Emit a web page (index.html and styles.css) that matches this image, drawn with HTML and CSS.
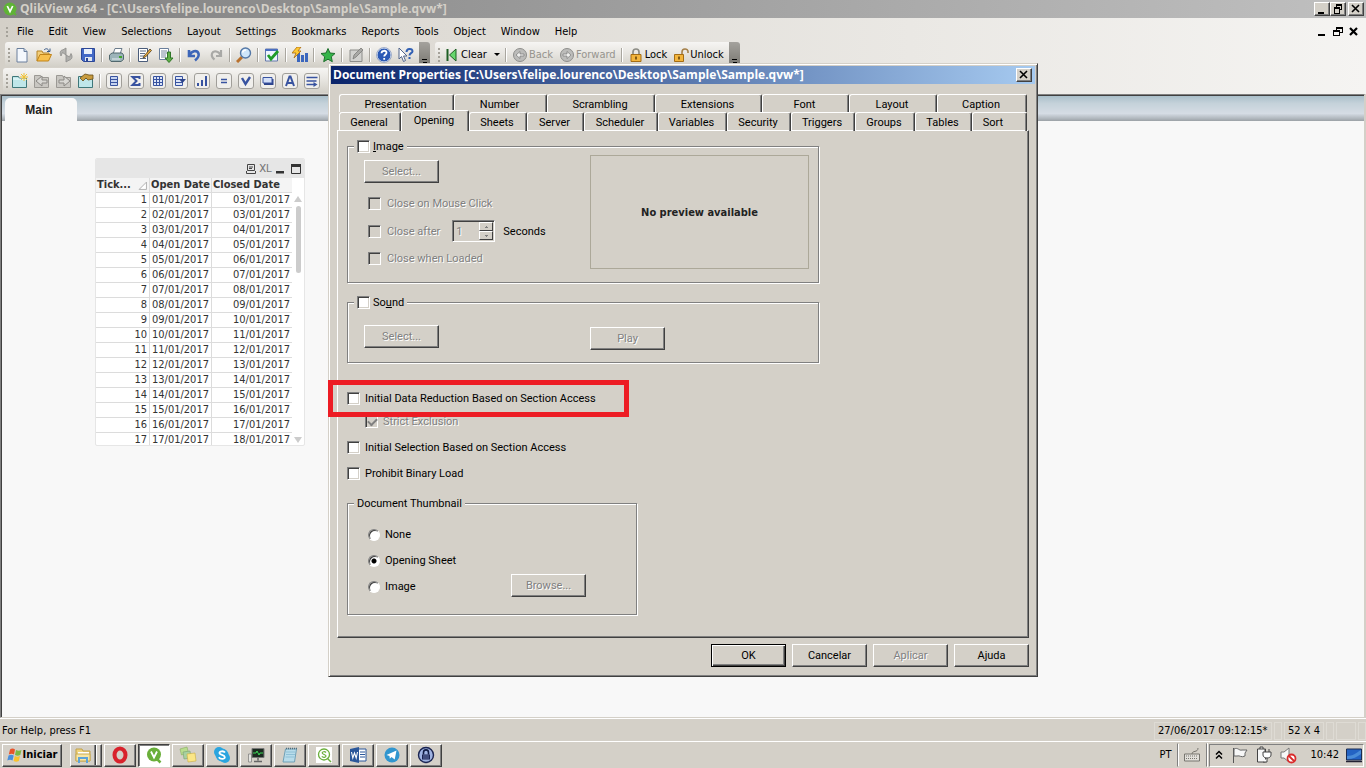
FILE: index.html
```html
<!DOCTYPE html>
<html lang="en">
  <head>
    <meta charset="utf-8" />
    <meta name="viewport" content="width=device-width, initial-scale=1.0" />
    <title>QlikView x64 - [C:\Users\felipe.lourenco\Desktop\Sample\Sample.qvw*]</title>
    <link rel="stylesheet" href="styles.css">
  </head>

  <body>
    <header class="titlebar">
      <svg class="logo" viewBox="0 0 14 14"><circle cx="7" cy="7" r="6.500" fill="#5fb336"/><path d="M9 9l4 4" stroke="#5fb336" stroke-width="2"/><path d="M4.300 4l2.700 5.600L9.700 4" fill="none" stroke="#fff" stroke-width="1.700"/></svg>
      <h1>QlikView x64 - [C:\Users\felipe.lourenco\Desktop\Sample\Sample.qvw*]</h1>
      <div class="winbtns">
        <button class="winbtn" aria-label="Minimize"><svg viewBox="0 0 14 12"><path d="M3 9h6v2H3z"/></svg></button>
        <button class="winbtn" aria-label="Restore"><svg viewBox="0 0 14 12"><path d="M5 1h6v6H9V6h1V3H6v1H5zM3 4h6v7H3zm1 2v4h4V6z" fill-rule="evenodd"/></svg></button>
        <button class="winbtn winclose" aria-label="Close"><svg viewBox="0 0 14 12"><path d="M3 2l7 7M10 2L3 9" stroke="#000" stroke-width="1.600"/></svg></button>
      </div>
    </header>

    <div class="chrome">
      <nav class="menubar">
        <span class="grip"></span>
        <a href="#">File</a>
        <a href="#">Edit</a>
        <a href="#">View</a>
        <a href="#">Selections</a>
        <a href="#">Layout</a>
        <a href="#">Settings</a>
        <a href="#">Bookmarks</a>
        <a href="#">Reports</a>
        <a href="#">Tools</a>
        <a href="#">Object</a>
        <a href="#">Window</a>
        <a href="#">Help</a>
        <div class="childbtns">
          <button aria-label="Minimize sheet"><svg viewBox="0 0 10 10"><path d="M1 7h7v2H1z"/></svg></button>
          <button aria-label="Restore sheet"><svg viewBox="0 0 10 10"><path d="M3 0h7v6H7V5h2V2H4v1H3zM0 3h7v6H0zm1 2v3h5V5z" fill-rule="evenodd"/></svg></button>
          <button aria-label="Close sheet"><svg viewBox="0 0 10 10"><path d="M1 1l7 7M8 1L1 8" stroke="#000" stroke-width="2.200"/></svg></button>
        </div>
      </nav>

      <div class="bars">
        <div class="toolbar">
          <span class="grip"></span>
          <button class="tool" aria-label="New"><svg viewBox="0 0 16 16"><path d="M3 1.500h7l3 3v10.500H3z" fill="#f4f8fd" stroke="#6a7f9c"/><path d="M10 1.500v3h3" fill="#c9d8ea" stroke="#6a7f9c"/></svg></button>
          <button class="tool" aria-label="Open"><svg viewBox="0 0 16 16"><path d="M1 14V4h5l1 2h6v2" fill="#f3cf7b" stroke="#b58429"/><path d="M1 14l3-6.500h11.500L12.500 14z" fill="#f8c04c" stroke="#c08319"/><path d="M8 3c2-2 4-1.500 5 1M14 1.500v3h-3" fill="none" stroke="#3a5a88"/></svg></button>
          <button class="tool" aria-label="Reload" disabled><svg viewBox="0 0 16 16"><path d="M8 1v7L4.500 5.500 3 9C1 5 3 3 5 2.800zM8 15V8l3.500 2L13 6.500c2.500 4 0 6.500-2 6.700z" fill="#b0b0ad" stroke="#8c8c89" stroke-width=".8"/></svg></button>
          <button class="tool" aria-label="Save"><svg viewBox="0 0 16 16"><path d="M1.500 1.500h13v13h-11l-2-2z" fill="#4369c7" stroke="#2c4796"/><path d="M4 2h8v5H4z" fill="#e9f0fb"/><path d="M5 10h7v4H5z" fill="#dfe5ef"/><path d="M6 11h2v3H6z" fill="#2c4796"/></svg></button>
          <i class="sep"></i>
          <button class="tool" aria-label="Print"><svg viewBox="0 0 16 16"><path d="M5 7l2-5.500h7L12 7z" fill="#fff" stroke="#6b7c8c"/><path d="M1.500 8L4 6h10l1.500 2v4.500L13 14.500H3L1.500 12.500z" fill="#9cb4b9" stroke="#51686e"/><path d="M4 12h8" stroke="#e6eef0"/><path d="M11 10h3" stroke="#41a42c" stroke-width="2"/></svg></button>
          <i class="sep"></i>
          <button class="tool" aria-label="Edit Script"><svg viewBox="0 0 16 16"><path d="M2.500 1.500h9v13h-9z" fill="#fff" stroke="#4b5d7b"/><path d="M4 4h6M4 6.500h5M4 9h6M4 11.500h6" stroke="#5a6a84"/><path d="M8 9l6-7 1.500 1.500L9.500 10 7 11z" fill="#e6a83b" stroke="#4c3a1b" stroke-width=".8"/></svg></button>
          <button class="tool" aria-label="Partial Reload"><svg viewBox="0 0 16 16"><path d="M1.500 1.500h9v11h-9z" fill="#fff" stroke="#6a7f9c"/><path d="M3 4h6M3 6h6M3 8h5M3 10h5" stroke="#7788a0"/><path d="M9.500 5h3v6H15l-4 4.500L7 11h2.500z" fill="#5fae47" stroke="#2f7628"/></svg></button>
          <i class="sep"></i>
          <button class="tool" aria-label="Undo"><svg viewBox="0 0 16 16"><path d="M3 3v6h6M3.500 8.500C5 4 11 2.500 12.500 6.500c.8 2.500-1 5-3.500 7" fill="none" stroke="#3d66b8" stroke-width="2.600"/></svg></button>
          <button class="tool" aria-label="Redo" disabled><svg viewBox="0 0 16 16"><path d="M13 3v6H8M12.500 8.500C11 4 5.500 3 4 6.500c-.8 2.500.5 4.500 2.500 6" fill="none" stroke="#a9a9a6" stroke-width="2.200"/></svg></button>
          <i class="sep"></i>
          <button class="tool" aria-label="Search"><svg viewBox="0 0 16 16"><path d="M1 15l5-5" stroke="#b9712c" stroke-width="3"/><circle cx="9.500" cy="6" r="5" fill="#cfe6fa" stroke="#5377a6" stroke-width="1.400"/><path d="M6.500 5.500c.5-2 2-2.500 3.500-2.500" fill="none" stroke="#fff" stroke-width="1.500"/></svg></button>
          <i class="sep"></i>
          <button class="tool" aria-label="Current Selections"><svg viewBox="0 0 16 16"><path d="M1.500 2h12v12h-12z" fill="#eef4ff" stroke="#6479a8"/><path d="M1 2h13v2H1z" fill="#4c6fc0"/><path d="M4 8l3 4 7-8" fill="none" stroke="#1f9c28" stroke-width="2.800"/></svg></button>
          <i class="sep"></i>
          <button class="tool" aria-label="Quick Chart"><svg viewBox="0 0 16 16"><path d="M5 5h3v10H5zM9 8h3v7H9zM13 6h3v9h-3z" fill="#3b66bd"/><path d="M5 0h4L6 4h3L2 11l2-5H0z" fill="#ffc933" stroke="#a9690f" stroke-width=".8"/></svg></button>
          <i class="sep"></i>
          <button class="tool" aria-label="Add Bookmark"><svg viewBox="0 0 16 16"><path d="M8 1.500l2 4.500 5 .5-3.700 3.300 1 4.900L8 12.200l-4.300 2.500 1-4.900L1 6.500 6 6z" fill="#35b449" stroke="#1d6e2b"/></svg></button>
          <i class="sep"></i>
          <button class="tool" aria-label="Notes" disabled><svg viewBox="0 0 16 16"><path d="M2 3h12v11.500H2z" fill="#d2d2cf" stroke="#8c8c89"/><path d="M5 12l1-4 7-7 2 2-7 7z" fill="#a9a9a6" stroke="#7b7b78" stroke-width=".8"/></svg></button>
          <i class="sep"></i>
          <button class="tool" aria-label="Help"><svg viewBox="0 0 16 16"><circle cx="8" cy="8" r="7" fill="#2b59b5" stroke="#dce6f6"/><circle cx="8" cy="8" r="7.500" fill="none" stroke="#7388b3" stroke-width=".6"/><path d="M5.500 6.200C5.500 3 10.800 3 10.500 6c-.2 1.500-2.300 1.500-2.300 3.500M8.200 11v1.800" fill="none" stroke="#fff" stroke-width="1.800"/></svg></button>
          <button class="tool" aria-label="Context Help"><svg viewBox="0 0 16 16"><path d="M1 1v11l2.500-2.500 2 5 2-1-2-4.500H9z" fill="#fff" stroke="#50648b"/><path d="M8.500 5C8.500 1 14.500 1 14.500 4.200c0 2-3 2-3 4.300M11.500 10v2" fill="none" stroke="#3260b4" stroke-width="2"/></svg></button>
          <span class="overflow"></span>
        </div>

        <div class="toolbar selections">
          <span class="grip"></span>
          <button class="tool wide"><svg viewBox="0 0 16 16"><path d="M3.500 2v12" stroke="#1d5e24" stroke-width="2"/><path d="M12 2v12L5.500 8z" fill="#67d66d" stroke="#1d5e24"/></svg>Clear<b class="arrow"></b></button>
          <i class="sep"></i>
          <button class="tool wide" disabled><svg viewBox="0 0 16 16"><circle cx="8" cy="8" r="6.500" fill="#bcbcba" stroke="#8e8e8c"/><path d="M12 7H8V4.500L4 8l4 3.500V9h4z" fill="#efefed" stroke="#7a7a78" stroke-width=".7"/></svg>Back</button>
          <button class="tool wide" disabled><svg viewBox="0 0 16 16"><circle cx="8" cy="8" r="6.500" fill="#bcbcba" stroke="#8e8e8c"/><path d="M4 7h4V4.500L12 8l-4 3.500V9H4z" fill="#efefed" stroke="#7a7a78" stroke-width=".7"/></svg>Forward</button>
          <i class="sep"></i>
          <button class="tool wide"><svg viewBox="0 0 16 16"><path d="M5 8V5c0-4 6-4 6 0v3" fill="none" stroke="#8d8d86" stroke-width="1.700"/><path d="M3 7.500h10v7H3z" fill="#f3b53d" stroke="#a56d14"/><path d="M8 9.500v3" stroke="#5e3d06" stroke-width="1.500"/></svg>Lock</button>
          <button class="tool wide"><svg viewBox="0 0 16 16"><path d="M9 8V5c0-4 6-4 6-.5V6" fill="none" stroke="#a5804a" stroke-width="1.600"/><path d="M1.500 7.500h9v7h-9z" fill="#f3b53d" stroke="#a56d14"/><path d="M6 9.500v3" stroke="#5e3d06" stroke-width="1.500"/></svg>Unlock</button>
          <span class="overflow"></span>
        </div>
      </div>

      <div class="bars">
        <div class="toolbar design">
          <span class="grip"></span>
          <button class="tool" aria-label="Add Sheet"><svg viewBox="0 0 16 16"><path d="M.5 3.500h6l1 2h7v9H.5z" fill="#bfe6e9" stroke="#3e7779"/><path d="M1 6l13 0" stroke="#f2ffff"/><path d="M12 0v8M8 4h8M9 1l6 6M15 1L9 7" stroke="#f1c232"/></svg></button>
          <button class="tool" aria-label="Promote Sheet" disabled><svg viewBox="0 0 16 16"><path d="M.5 2.500h6l1 2h7v10H.5z" fill="#c9c7c2" stroke="#9b9994"/><path d="M13 7H8V3L2 8l6 5v-3h5z" fill="#d9d8d4" stroke="#8b8985"/></svg></button>
          <button class="tool" aria-label="Demote Sheet" disabled><svg viewBox="0 0 16 16"><path d="M.5 2.500h6l1 2h7v10H.5z" fill="#c9c7c2" stroke="#9b9994"/><path d="M3 7h5V3l6 5-6 5v-3H3z" fill="#d9d8d4" stroke="#8b8985"/></svg></button>
          <button class="tool" aria-label="Sheet Properties"><svg viewBox="0 0 16 16"><path d="M.5 3.500h6l1 2h7v9H.5z" fill="#bfe6e9" stroke="#3e7779"/><path d="M2 5l5-4 4 1 4 0v4l-5 1-2-2-3 3z" fill="#c79b3e" stroke="#674b16" stroke-width=".8"/></svg></button>
          <i class="sep"></i>
          <button class="tool box" aria-label="List Box"><svg viewBox="1 1 14 14"><path d="M4.500 3.500h7v9h-7zM4 6.500h8M4 9.500h8" fill="#c5d3f0" stroke="#3853a0"/></svg></button>
          <button class="tool box" aria-label="Statistics Box"><svg viewBox="1 1 14 14"><path d="M11.500 6V4h-7l4 4-4 4h7v-2" fill="none" stroke="#3853a0" stroke-width="2"/></svg></button>
          <button class="tool box" aria-label="Table Box"><svg viewBox="1 1 14 14"><path d="M3.500 3.500h9v9h-9zM3 6.500h10M3 9.500h10M6.500 3v10M9.500 3v10" fill="#dbe4f7" stroke="#3853a0"/></svg></button>
          <button class="tool box" aria-label="Multi Box"><svg viewBox="1 1 14 14"><path d="M3.500 3.500h7v9h-7zM3 6.500h8M3 9.500h8" fill="#dbe4f7" stroke="#3853a0"/><path d="M7 6h7l-3.500 4z" fill="#2c438a"/></svg></button>
          <button class="tool box" aria-label="Chart"><svg viewBox="1 1 14 14"><path d="M3 10h2v3H3zM7 7h2v6H7zM11 3h2v10h-2z" fill="#3853a0"/></svg></button>
          <button class="tool box" aria-label="Input Box"><svg viewBox="1 1 14 14"><path d="M5 6.500h6M5 9.500h6" stroke="#3853a0" stroke-width="1.600"/></svg></button>
          <button class="tool box" aria-label="Current Selections Box"><svg viewBox="1 1 14 14"><path d="M4 5l3.500 6L12 4" fill="none" stroke="#3853a0" stroke-width="2.400"/></svg></button>
          <button class="tool box" aria-label="Button"><svg viewBox="1 1 14 14"><path d="M4 6h9.500v6H4z" fill="#2c438a"/><path d="M3 4.500h9v5.500H3z" fill="#d4e0f8" stroke="#3853a0"/></svg></button>
          <button class="tool box" aria-label="Text Object"><svg viewBox="1 1 14 14"><path d="M4 13L7.500 3.500h1L12 13M5.500 10h5" fill="none" stroke="#3853a0" stroke-width="2"/></svg></button>
          <button class="tool box" aria-label="Line Object"><svg viewBox="1 1 14 14"><path d="M2.500 4.500h11M2.500 8h10M2.500 11.500h8" stroke="#3853a0" stroke-width="1.600"/><path d="M9.500 9v5l4-2.500z" fill="#3853a0"/></svg></button>
        </div>
      </div>
    </div>

    <main class="workspace">
      <div class="sheettabs"><a class="sheettab" href="#">Main</a></div>

      <section class="tablebox">
        <div class="caption">
          <svg viewBox="0 0 10 10"><path d="M1.500.5h7v6h-7zM3 3h4M3 4.500h3M.5 7v2.500h9V7" fill="none" stroke="#444"/></svg>
          <span>XL</span>
          <svg viewBox="0 0 10 10"><path d="M1 7h8v2.500H1z" fill="#333"/></svg>
          <svg class="max" viewBox="0 0 10 10"><path d="M.5.5h9v9h-9z" fill="none" stroke="#333"/><path d="M0 0h10v3H0z" fill="#333"/></svg>
        </div>
        <div class="tablebody">
          <table>
            <thead>
              <tr><th>Tick...<svg viewBox="0 0 8 8"><path d="M1 7.500h6.500V1z" fill="#fff" stroke="#aaa" stroke-width=".8"/></svg></th><th>Open Date</th><th>Closed Date</th></tr>
            </thead>
            <tbody>
              <tr><td>1</td><td>01/01/2017</td><td>03/01/2017</td></tr>
              <tr><td>2</td><td>02/01/2017</td><td>03/01/2017</td></tr>
              <tr><td>3</td><td>03/01/2017</td><td>04/01/2017</td></tr>
              <tr><td>4</td><td>04/01/2017</td><td>05/01/2017</td></tr>
              <tr><td>5</td><td>05/01/2017</td><td>06/01/2017</td></tr>
              <tr><td>6</td><td>06/01/2017</td><td>07/01/2017</td></tr>
              <tr><td>7</td><td>07/01/2017</td><td>08/01/2017</td></tr>
              <tr><td>8</td><td>08/01/2017</td><td>09/01/2017</td></tr>
              <tr><td>9</td><td>09/01/2017</td><td>10/01/2017</td></tr>
              <tr><td>10</td><td>10/01/2017</td><td>11/01/2017</td></tr>
              <tr><td>11</td><td>11/01/2017</td><td>12/01/2017</td></tr>
              <tr><td>12</td><td>12/01/2017</td><td>13/01/2017</td></tr>
              <tr><td>13</td><td>13/01/2017</td><td>14/01/2017</td></tr>
              <tr><td>14</td><td>14/01/2017</td><td>15/01/2017</td></tr>
              <tr><td>15</td><td>15/01/2017</td><td>16/01/2017</td></tr>
              <tr><td>16</td><td>16/01/2017</td><td>17/01/2017</td></tr>
              <tr><td>17</td><td>17/01/2017</td><td>18/01/2017</td></tr>
            </tbody>
          </table>
          <div class="scroll">
            <i class="up"></i>
            <i class="thumb"></i>
            <i class="down"></i>
          </div>
        </div>
      </section>
    </main>

    <footer class="statusbar">
      <span class="hint">For Help, press F1</span>
      <span class="pane date">27/06/2017 09:12:15*</span>
      <span class="pane"></span>
      <span class="pane size">52 X 4</span>
      <span class="pane"></span>
      <span class="pane blank"></span>
      <span class="pane"></span>
    </footer>

    <div class="taskbar">
      <button class="start"><svg viewBox="0 0 16 16"><path d="M3 2.500c2-1.500 3.500-1 5 0L7 7.500C5.500 6.500 4 6.500 1.800 7.500z" fill="#e8542a"/><path d="M9 3c2 1 3.500 1 5.500 0l-1.200 5c-2 1-3.600.8-5.300 0z" fill="#7cb943"/><path d="M1.500 8.500c2-1.200 3.500-1 5.200 0l-1.200 5c-1.700-1-3.200-1-5.200 0z" fill="#4a8fdc"/><path d="M7.800 9c1.800 1 3.300.9 5.200 0l-1.200 5c-2 1-3.500.9-5.200 0z" fill="#f9c22d"/></svg>Iniciar</button>
      <div class="tasks">
        <button class="task stacked" aria-label="Explorer"><svg viewBox="0 0 18 18"><path d="M2 3h6l1 2h7v10H2z" fill="#f0d47c" stroke="#c0a04b"/><path d="M4 6h11v5H4z" fill="#fff"/><path d="M2 8h14v7H2z" fill="#f8e6a3" stroke="#c9ab56"/><path d="M5 17v-5h8v5" fill="none" stroke="#5ea3d8" stroke-width="2"/></svg></button>
        <button class="task" aria-label="Opera"><svg viewBox="0 0 18 18"><ellipse cx="9" cy="9" rx="5.500" ry="6.500" fill="none" stroke="#d8222c" stroke-width="4"/></svg></button>
        <button class="task active" aria-label="QlikView"><svg viewBox="0 0 18 18"><circle cx="9" cy="8.500" r="7" fill="#6aaf3a"/><path d="M11 12l4.500 4.500" stroke="#6aaf3a" stroke-width="2.500"/><path d="M6 5.500l3 6 3-6" fill="none" stroke="#fff" stroke-width="1.800"/></svg></button>
        <button class="task" aria-label="Sticky Notes"><svg viewBox="0 0 18 18"><path d="M1 3l7-2 1.500 6-7 2z" fill="#b9dd8f" stroke="#86ac5d" stroke-width=".6"/><path d="M4 6l7-1 1 7-7 1z" fill="#a8d1a0" stroke="#75a070" stroke-width=".6"/><path d="M8 8l8-1 1 8-8 1z" fill="#fbe686" stroke="#c9ad41" stroke-width=".6"/></svg></button>
        <button class="task" aria-label="Skype"><svg viewBox="0 0 18 18"><circle cx="6" cy="6" r="5" fill="#2aa5df"/><circle cx="12" cy="12" r="5" fill="#2aa5df"/><circle cx="9" cy="9" r="6.500" fill="#2aa5df"/><path d="M12 6.500C10.500 4.500 6 5 6.500 7.200 7 9.300 11.500 8.500 11.800 11c.2 2.300-4.300 2.800-6 .3" fill="none" stroke="#fff" stroke-width="1.800"/></svg></button>
        <button class="task" aria-label="Remote Monitor"><svg viewBox="0 0 18 18"><path d="M1.500 8v8h3V8z" fill="#e5e5e2" stroke="#777" stroke-width=".7"/><path d="M5 2.500h12v9H5z" fill="#1c2a20" stroke="#777"/><path d="M6 7h3l1-2 2 4 1-2h3" fill="none" stroke="#3dd556"/><path d="M11 12v2.500M7 15.500h8" stroke="#666" stroke-width="1.500"/></svg></button>
        <button class="task" aria-label="Notepad"><svg viewBox="0 0 18 18"><path d="M4.500 3h11L13.500 16H2z" fill="#b8dcea" stroke="#6fa0b6"/><path d="M5 6h9M5 8.500h9M4.500 11h9" stroke="#8ec0d6"/><path d="M5 2.500h11" stroke="#506c7c" stroke-width="1.500" stroke-dasharray="1 1"/></svg></button>
        <button class="task" aria-label="Qlik Sense"><svg viewBox="0 0 18 18"><path d="M1 1h16v16H1z" fill="#fff"/><circle cx="9" cy="8.500" r="5.500" fill="none" stroke="#6aaf3a" stroke-width="1.300"/><path d="M12 12l4 4" stroke="#6aaf3a" stroke-width="1.400"/><path d="M11 6.500c-1-1.200-4-1-3.800.5S11 8.500 11 10s-3 1.800-4.200.4" fill="none" stroke="#6aaf3a" stroke-width="1.200"/></svg></button>
        <button class="task" aria-label="Word"><svg viewBox="0 0 18 18"><path d="M9 3h8v12H9z" fill="#fff" stroke="#2b579a"/><path d="M11 6h5M11 8.500h5M11 11h5" stroke="#2b579a"/><path d="M1 3l9-2v16l-9-2z" fill="#2b579a"/><path d="M2.500 6l1.300 6L5.500 7l1.700 5 1.300-6" fill="none" stroke="#fff" stroke-width="1.100"/></svg></button>
        <button class="task" aria-label="Telegram"><svg viewBox="0 0 18 18"><circle cx="9" cy="9" r="7.500" fill="#3196cf"/><path d="M3.500 9l10-4.500-1.800 9L8.500 11l-1.700 1.800L6.500 10z" fill="#fff"/></svg></button>
        <button class="task" aria-label="Lock"><svg viewBox="0 0 18 18"><circle cx="9" cy="9" r="7.500" fill="#9fb3e2" stroke="#1b2552" stroke-width="1.400"/><path d="M6.500 8.500V6.500c0-3.500 5-3.500 5 0v2" fill="none" stroke="#111c44" stroke-width="1.600"/><path d="M5 8.500h8v5H5z" fill="#1a2350"/><path d="M6 10h6M6 12h6" stroke="#8b9bd0" stroke-width=".7"/></svg></button>
      </div>
      <span class="lang">PT</span>
      <div class="keyboard"><svg viewBox="0 0 18 18"><path d="M1.500 8h15v7h-15z" fill="#e2e0db" stroke="#77756f"/><path d="M3 10h12M3 12.500h12" stroke="#77756f" stroke-dasharray="1 1"/><path d="M9 8c0-4 6-1 6-6" fill="none" stroke="#77756f"/></svg></div>
      <div class="tray">
        <svg class="chevron" viewBox="0 0 8 10"><path d="M1 4.500L4 1.500l3 3M1 8.500l3-3 3 3" fill="none" stroke="#000" stroke-width="1.500"/></svg>
        <svg viewBox="0 0 18 18"><path d="M2.500 2v15" stroke="#555"/><path d="M3 3c4-2 5 2 8 1h5l-2 3 0 3c-4 2-5-1-8 0H3z" fill="#f7f7f7" stroke="#666"/></svg>
        <svg viewBox="0 0 18 18"><path d="M2.500 3h8v13h-8zM5 3V1h3v2" fill="#f7f7f7" stroke="#444"/><path d="M8 6h8v3c0 2-2 3-4 3s-4-1-4-3zM10 6V3M14 6V3M12 12v4H8" fill="#fff" stroke="#444"/></svg>
        <svg viewBox="0 0 18 18"><path d="M2 6h3l5-4v14l-5-4H2z" fill="#f7f7f7" stroke="#777"/><circle cx="12.500" cy="12.500" r="4" fill="#fff" stroke="#d92b2b" stroke-width="1.800"/><path d="M10 10l5 5" stroke="#d92b2b" stroke-width="1.800"/></svg>
        <time>10:42</time>
        <svg viewBox="0 0 18 18"><path d="M1.500 3h15v11h-15z" fill="#2463c3" stroke="#1c2c50"/><path d="M2 10c6 0 9-3 14-6v4c-4 3-8 5-14 5z" fill="#4a8cd8"/><path d="M1 15.500h16" stroke="#223" stroke-width="1.500"/></svg>
      </div>
    </div>

    <div class="dialog" role="dialog" aria-labelledby="dlgtitle">
      <div class="dlgtitle">
        <h2 id="dlgtitle">Document Properties [C:\Users\felipe.lourenco\Desktop\Sample\Sample.qvw*]</h2>
        <button class="winbtn" aria-label="Close dialog"><svg viewBox="0 0 14 12"><path d="M3 2l7 7M10 2L3 9" stroke="#000" stroke-width="1.600"/></svg></button>
      </div>

      <div class="tabs">
        <div class="tabrow back">
          <button class="tab">Presentation</button>
          <button class="tab">Number</button>
          <button class="tab">Scrambling</button>
          <button class="tab">Extensions</button>
          <button class="tab">Font</button>
          <button class="tab">Layout</button>
          <button class="tab">Caption</button>
        </div>
        <div class="tabrow front">
          <button class="tab">General</button>
          <button class="tab selected">Opening</button>
          <button class="tab">Sheets</button>
          <button class="tab">Server</button>
          <button class="tab">Scheduler</button>
          <button class="tab">Variables</button>
          <button class="tab">Security</button>
          <button class="tab">Triggers</button>
          <button class="tab">Groups</button>
          <button class="tab">Tables</button>
          <button class="tab last">Sort</button>
        </div>
      </div>

      <div class="page">
        <fieldset class="group image">
          <legend><label class="check"><input type="checkbox"><span><u>I</u>mage</span></label></legend>
          <div class="options">
            <button class="btn" disabled>Select...</button>
            <label class="check off"><input type="checkbox" disabled>Close on Mouse Click</label>
            <div class="after">
              <label class="check off"><input type="checkbox" disabled>Close after</label>
              <div class="spin">
                <input type="text" id="secs" value="1" disabled>
                <button class="spinup" aria-label="More" disabled></button>
                <button class="spindown" aria-label="Less" disabled></button>
              </div>
              <label for="secs">Seconds</label>
            </div>
            <label class="check off"><input type="checkbox" disabled>Close when Loaded</label>
          </div>
          <div class="preview">No preview available</div>
        </fieldset>

        <fieldset class="group sound">
          <legend><label class="check"><input type="checkbox"><span>So<u>u</u>nd</span></label></legend>
          <button class="btn" disabled>Select...</button>
          <button class="btn play" disabled>Play</button>
        </fieldset>

        <div class="security">
          <div class="highlight">
            <label class="check"><input type="checkbox">Initial Data Reduction Based on Section Access</label>
          </div>
          <label class="check off strict"><input type="checkbox" checked disabled>Strict Exclusion</label>
          <label class="check"><input type="checkbox">Initial Selection Based on Section Access</label>
          <label class="check"><input type="checkbox">Prohibit Binary Load</label>
        </div>

        <fieldset class="group thumbnail">
          <legend>Document Thumbnail</legend>
          <div class="radios">
            <label class="check"><input type="radio" name="thumb">None</label>
            <label class="check"><input type="radio" name="thumb" checked>Opening Sheet</label>
            <label class="check"><input type="radio" name="thumb">Image</label>
          </div>
          <button class="btn" disabled>Browse...</button>
        </fieldset>
      </div>

      <div class="actions">
        <button class="btn default">OK</button>
        <button class="btn">Cancelar</button>
        <button class="btn" disabled>Aplicar</button>
        <button class="btn">Ajuda</button>
      </div>
    </div>
  </body>
</html>
```

FILE: styles.css
```css
* {
  box-sizing: border-box;
}
body {
  margin: 0;
  height: 100vh;
  display: flex;
  flex-direction: column;
  overflow: hidden;
  background: #d4d0c8;
  color: #000;
  font: 11px/14px "DejaVu Sans Condensed", "DejaVu Sans", Tahoma, sans-serif;
}
h1,
h2 {
  margin: 0;
  font: bold 12px/14px "Open Sans", Tahoma, sans-serif;
  white-space: nowrap;
}
a {
  color: inherit;
  text-decoration: none;
}
button,
input {
  margin: 0;
  padding: 0;
  border: 0;
  background: none;
  color: inherit;
  font: inherit;
}
svg {
  display: block;
  flex: none;
}

/* main window */
.titlebar {
  display: flex;
  align-items: center;
  height: 18px;
  padding: 0 2px 0 3px;
  background: linear-gradient(to right, #808080, #c0c0c0);
  color: #d4d0c8;
}
.logo {
  width: 14px;
  height: 14px;
  margin-right: 3px;
}
.winbtns {
  display: flex;
  margin-left: auto;
}
.winbtn {
  width: 16px;
  height: 14px;
  background: #d4d0c8;
  border: 1px solid;
  border-color: #fff #404040 #404040 #fff;
  box-shadow: inset -1px -1px 0 #808080;
}
.winbtn svg {
  width: 14px;
  height: 12px;
}
.winclose {
  margin-left: 2px;
}
.chrome {
  height: 76px;
  padding-top: 1px;
  background: linear-gradient(to right, #d4d0c8, #f5f4f2);
}
.menubar {
  display: flex;
  align-items: center;
  gap: 15px;
  height: 23px;
  padding: 3px 7px 0 6px;
}
.grip {
  flex: none;
  width: 2px;
  height: 14px;
  background: repeating-linear-gradient(#a5a29a 0 2px, transparent 2px 4px);
}
.menubar .grip {
  height: 11px;
  margin-right: -6px;
}
.childbtns {
  display: flex;
  gap: 6px;
  margin-left: auto;
}
.childbtns svg {
  width: 10px;
  height: 10px;
}
.bars {
  display: flex;
  gap: 5px;
  height: 26px;
  padding-left: 5px;
}
.bars:last-child {
  height: 25px;
  padding-left: 3px;
}
.toolbar {
  display: flex;
  align-items: center;
  height: 25px;
  padding-left: 3px;
  border-radius: 3px;
  background: linear-gradient(#f6f5f3, #e6e4df 50%, #d2cfc7);
}
.tool {
  display: flex;
  align-items: center;
  justify-content: center;
  width: 22px;
  height: 22px;
}
.tool svg {
  width: 16px;
  height: 16px;
}
.toolbar .grip + .tool {
  margin-left: 1px;
}
.box svg {
  border: 1px solid #a09e99;
  border-radius: 3px;
  background: #f0efec;
}
.sep {
  width: 2px;
  height: 14px;
  margin: 0 2px;
  background: #a9a69f;
  border-right: 1px solid #fff;
}
.overflow {
  align-self: stretch;
  width: 11px;
  margin-left: 2px;
  border-radius: 0 3px 3px 0;
  background: linear-gradient(#000, #000) 3px 17px / 5px 1px no-repeat,
    linear-gradient(#000, #000) 4px 20px / 4px 2px no-repeat,
    linear-gradient(#a4a29d, #77756f);
}
.design {
  width: 640px;
}
.wide {
  width: auto;
  padding: 0 3px;
  gap: 1px;
}
.wide:disabled {
  color: #96948e;
}
.arrow {
  margin-left: 6px;
  border: 3px solid transparent;
  border-top-color: #000;
  border-bottom: 0;
}

.workspace {
  flex: 1;
  min-height: 0;
  margin-right: 1px;
  border: 1px solid;
  border-color: #808080 #d4d0c8 #d4d0c8 #808080;
  box-shadow: inset 1px 1px 0 #404040;
  background: #f8f8f8;
}
.sheettabs {
  display: flex;
  align-items: flex-end;
  height: 25px;
  margin: 1px 0 0 1px;
  padding-left: 3px;
  background: linear-gradient(#aabfca, #c5d2da 30%, #d5dce4 70%, #b0b7bd 90%, #9ba1a6);
}
.sheettab {
  width: 72px;
  height: 23px;
  border-radius: 5px 5px 0 0;
  background: #f8f8f8;
  color: #222;
  font: bold 12px/24px "Liberation Sans", Arial, sans-serif;
  text-align: center;
  padding-right: 4px;
}
.tablebox {
  width: 210px;
  height: 288px;
  margin: 37px 0 0 94px;
  overflow: hidden;
  border: 1px solid #e6e6e6;
  border-radius: 2px;
  background: #fff;
  color: #333;
}
.caption {
  display: flex;
  align-items: center;
  justify-content: flex-end;
  gap: 3px;
  height: 19px;
  padding: 0 3px;
  background: #e6e6e6;
  color: #777;
  font: 11px/14px Roboto, Arial, sans-serif;
}
.caption svg {
  width: 10px;
  height: 10px;
}
.caption .max {
  margin-left: 3px;
}
.tablebody {
  display: flex;
}
table {
  width: 196px;
  flex: none;
  table-layout: fixed;
  border-collapse: separate;
  border-spacing: 0;
}
th,
td {
  height: 15px;
  padding: 0 2px 0 1px;
  line-height: 14px;
  text-align: right;
  white-space: nowrap;
  border-right: 1px solid #dcdcdc;
  border-bottom: 1px solid #dcdcdc;
}
th {
  background: #f4f4f4;
  text-align: left;
  overflow: hidden;
}
th:last-child,
td:last-child {
  border-right: 0;
}
th:nth-child(1) {
  width: 54px;
}
th:nth-child(2) {
  width: 62px;
}
th svg {
  float: right;
  width: 9px;
  height: 9px;
  margin-top: 3px;
}
.scroll {
  flex: 1;
  display: flex;
  flex-direction: column;
  align-items: center;
  height: 267px;
  padding: 18px 0 2px;
}
.up,
.down {
  border: 4px solid transparent;
  border-top: 0;
  border-bottom: 6px solid #ccc;
}
.down {
  margin-top: auto;
  border-bottom: 0;
  border-top: 6px solid #ccc;
}
.thumb {
  width: 5px;
  height: 67px;
  margin-top: 4px;
  border-radius: 3px;
  background: #ccc;
}

.statusbar {
  display: flex;
  align-items: center;
  gap: 2px;
  height: 23px;
  padding: 2px 0 0 2px;
  border-top: 1px solid #fff;
  white-space: nowrap;
}
.hint {
  margin-right: auto;
}
.pane {
  width: 8px;
  height: 18px;
  padding: 1px 3px;
  border: 1px solid #dedbd4;
}
.pane.date {
  width: 118px;
}
.pane.size {
  width: 40px;
}
.pane.blank {
  width: 20px;
}
.taskbar {
  display: flex;
  align-items: center;
  height: 27px;
  padding: 0 2px;
  border-top: 1px solid #fff;
}
.start,
.task {
  height: 23px;
  display: flex;
  align-items: center;
  justify-content: center;
  border: 1px solid;
  border-color: #fff #404040 #404040 #fff;
  box-shadow: inset -1px -1px 0 #808080;
}
.start {
  width: 60px;
  font-weight: bold;
}
.start svg {
  width: 16px;
  height: 16px;
}
.tasks {
  display: flex;
  gap: 2px;
  margin: 0 auto 0 8px;
}
.task {
  width: 32px;
}
.task svg {
  width: 18px;
  height: 18px;
}
.stacked {
  padding-right: 6px;
  background: linear-gradient(to right, #808080 1px, #404040 1px 2px, #fff 2px 3px, transparent 3px) 23px 0 / 4px 100% no-repeat;
}
.active {
  background: #fff;
  border-color: #404040 #fff #fff #404040;
  box-shadow: inset 1px 1px 0 #808080;
}
.lang {
  margin-right: 6px;
}
.keyboard {
  padding: 2px 5px;
  border: 1px solid;
  border-color: transparent #808080 transparent #808080;
  box-shadow: inset 1px 0 0 #fff, 1px 0 0 #fff;
}
.keyboard svg,
.tray svg {
  width: 18px;
  height: 18px;
}
.tray {
  display: flex;
  align-items: center;
  gap: 6px;
  height: 23px;
  margin-left: 2px;
  padding: 0 0 0 5px;
  border: 1px solid;
  border-color: #808080 #fff #fff #808080;
}
.tray .chevron {
  width: 8px;
  height: 10px;
  margin-right: 2px;
}
.tray time {
  margin-left: 7px;
}

/* document properties */
.dialog {
  position: absolute;
  left: 328px;
  top: 63px;
  width: 710px;
  height: 614px;
  padding: 2px;
  background: #d4d0c8;
  border: 1px solid;
  border-color: #d4d0c8 #404040 #404040 #d4d0c8;
  box-shadow: inset 1px 1px 0 #fff, inset -1px -1px 0 #808080;
  font: 11px/13px Roboto, "Liberation Sans", Arial, sans-serif;
}
.dlgtitle {
  display: flex;
  align-items: center;
  justify-content: space-between;
  height: 18px;
  padding: 0 3px 0 2px;
  background: linear-gradient(to right, #0a246a, #a6caf0);
  color: #fff;
}
.tabs {
  padding: 10px 8px 0;
}
.tabrow {
  display: grid;
  height: 18px;
}
.back {
  grid-template-columns: 115fr 93fr 108fr 107fr 87fr 88fr 90fr;
}
.front {
  grid-template-columns: 62fr 68fr 58fr 57fr 74fr 69fr 64fr 64fr 60fr 57fr 55fr;
}
.tab {
  padding: 1px 2px 0 0;
  border: 1px solid;
  border-color: #fff #404040 transparent #fff;
  border-bottom: 0;
  border-radius: 3px 2px 0 0;
  box-shadow: inset -1px 0 0 #808080;
}
.tab.last {
  padding-right: 13px;
}
.tab.selected {
  position: relative;
  height: 21px;
  margin-top: -2px;
  padding-bottom: 2px;
  background: #d4d0c8;
}
.page {
  height: 508px;
  margin: 0 6px;
  padding: 9px;
  border: 1px solid;
  border-color: #fff #404040 #404040 #fff;
  box-shadow: inset -1px -1px 0 #808080;
}
.group {
  min-width: 0;
  margin: 0;
  padding: 0;
  border: 1px solid #808080;
  box-shadow: inset 1px 1px 0 #fff, 1px 1px 0 #fff;
}
.group legend {
  height: 13px;
  margin-left: 6px;
  padding: 0 3px;
  background: #d4d0c8;
}
.check {
  display: flex;
  align-items: center;
  gap: 5px;
  height: 13px;
  white-space: nowrap;
}
legend .check {
  gap: 3px;
}
.off,
.btn:disabled,
.spin input {
  color: #808080;
  text-shadow: 1px 1px 0 #fff;
}
input[type="checkbox"] {
  appearance: none;
  flex: none;
  width: 13px;
  height: 13px;
  background: #fff;
  border: 1px solid;
  border-color: #808080 #fff #fff #808080;
  box-shadow: inset 1px 1px 0 #404040, inset -1px -1px 0 #d4d0c8;
}
input[type="checkbox"]:disabled {
  background: #d4d0c8;
}
input[type="checkbox"]:checked::before {
  content: "";
  display: block;
  width: 7px;
  height: 4px;
  margin: 2px 0 0 2px;
  border: solid #808080;
  border-width: 0 0 2px 2px;
  transform: rotate(-45deg);
}
input[type="radio"] {
  appearance: none;
  flex: none;
  width: 12px;
  height: 12px;
  border: 1px solid;
  border-color: #808080 #fff #fff #808080;
  border-radius: 50%;
  background: #fff;
  box-shadow: inset 1px 1px 0 #404040;
}
input[type="radio"]:checked {
  background: radial-gradient(circle at 5px 5px, #000 2px, #fff 3px);
}
.btn {
  width: 75px;
  height: 23px;
  border: 1px solid;
  border-color: #fff #404040 #404040 #fff;
  box-shadow: inset -1px -1px 0 #808080;
}
.btn.default {
  border-color: #000;
  box-shadow: inset 1px 1px 0 #fff, inset -1px -1px 0 #404040, inset -2px -2px 0 #808080;
}
.image,
.sound {
  width: 472px;
}
.image {
  display: grid;
  grid-template-columns: 242px 219px;
  height: 143px;
}
.options {
  padding: 7px 0 0 16px;
}
.options > .check {
  margin: 14px 0 0 4px;
}
.options .off {
  gap: 6px;
}
.after {
  display: flex;
  align-items: center;
  margin: 10px 0 -4px 4px;
}
.spin {
  display: grid;
  grid-template-columns: 1fr 14px;
  grid-template-rows: 9px 9px;
  width: 43px;
  height: 22px;
  margin: 0 8px 0 12px;
  padding: 1px;
  border: 1px solid;
  border-color: #808080 #fff #fff #808080;
  box-shadow: inset 1px 1px 0 #404040;
}
.spin input {
  grid-row: span 2;
  min-width: 0;
  padding-left: 2px;
}
.spin button {
  border: 1px solid;
  border-color: #fff #404040 #404040 #fff;
  background: linear-gradient(#808080, #808080) 5px 4px / 3px 1px no-repeat,
    linear-gradient(#808080, #808080) 6px 3px / 1px 1px no-repeat;
}
.spin .spindown {
  background-position: 5px 3px, 6px 4px;
}
.preview {
  display: flex;
  align-items: center;
  justify-content: center;
  height: 114px;
  margin-top: 2px;
  padding-top: 2px;
  border: 1px solid #aca899;
  color: #222;
  font: bold 11px/14px "DejaVu Sans Condensed", "DejaVu Sans", sans-serif;
}
.sound {
  display: flex;
  height: 67px;
  margin-top: 13px;
}
.sound .btn {
  margin: 16px 0 0 16px;
}
.sound .play {
  margin: 18px 0 0 151px;
}
.security {
  display: flex;
  flex-direction: column;
  gap: 13px;
  padding: 17px 0;
}
.highlight {
  z-index: 1;
  width: 301px;
  margin: 0 0 -15px -19px;
  padding: 7px 14px;
  border: 5px solid #ed1c24;
}
.strict {
  margin-left: 18px;
}
.thumbnail {
  display: flex;
  width: 290px;
  height: 118px;
}
.radios {
  display: flex;
  flex-direction: column;
  gap: 13px;
  width: 163px;
  padding: 18px 0 0 20px;
}
.thumbnail .btn {
  margin-top: 64px;
}
.actions {
  display: flex;
  justify-content: flex-end;
  gap: 6px;
  padding: 6px;
}
```
